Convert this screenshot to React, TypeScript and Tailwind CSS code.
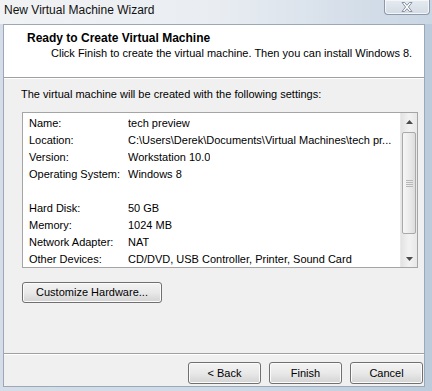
import React from 'react'

const rows = [
  ['Name:', 'tech preview'],
  ['Location:', 'C:\\Users\\Derek\\Documents\\Virtual Machines\\tech pr...'],
  ['Version:', 'Workstation 10.0'],
  ['Operating System:', 'Windows 8'],
  ['', ''],
  ['Hard Disk:', '50 GB'],
  ['Memory:', '1024 MB'],
  ['Network Adapter:', 'NAT'],
  ['Other Devices:', 'CD/DVD, USB Controller, Printer, Sound Card'],
]

const WinButton = ({ label, className }: { label: string; className: string }) => (
  <div
    className={`flex items-center justify-center rounded-[3px] border border-[#707070] bg-linear-to-b from-[#f3f3f3] via-[#e9e9e9] to-[#d3d3d3] text-[11px] leading-[15px] text-black shadow-[inset_0_0_0_1px_#fbfbfb] ${className}`}
  >
    {label}
  </div>
)

const Arrow = ({ up }: { up: boolean }) => (
  <svg width="7" height="4" viewBox="0 0 7 4">
    {up ? <polygon points="0,4 3.5,0 7,4" fill="#4a4a4a" /> : <polygon points="0,0 3.5,4 7,0" fill="#4a4a4a" />}
  </svg>
)

const App = () => {
  return (
    <div className="w-[432px] h-[391px] flex flex-col bg-linear-to-r from-[#d4dde8] via-[#cfdae6] to-[#bccbdc] font-['Liberation_Sans',Arial,sans-serif] text-[11px] text-black overflow-hidden">
      {/* title bar */}
      <div className="h-[24px] flex items-start justify-between bg-linear-to-r from-[#f1f2f4] via-[#e9edf2] to-[#c9d6e4]">
        <div className="pl-[4px] pt-[3px] text-[12px] leading-[15px] text-[#111]">New Virtual Machine Wizard</div>
        <div className="mr-[2px] w-[46px] h-[15px] flex items-center justify-center rounded-b-[4px] border border-t-0 border-[#8d99a8] bg-linear-to-b from-[#e6ebf1] to-[#d3dbe4] shadow-[inset_0_0_0_1px_#f4f6f9]">
          <svg width="12" height="10" viewBox="0 0 12 10">
            <polygon
              points="1,0.5 3.6,0.5 6,3.3 8.4,0.5 11,0.5 7.4,5 11,9.5 8.4,9.5 6,6.7 3.6,9.5 1,9.5 4.6,5"
              fill="#ffffff"
              stroke="#7d8896"
              strokeWidth="0.9"
            />
          </svg>
        </div>
      </div>

      {/* client area */}
      <div className="ml-[3px] w-[422px] h-[363px] flex flex-col border border-[#9aa8b8] bg-[#f0f0f0]">
        <div className="h-[53px] bg-white border-b border-[#a0a0a0] pt-[6px] leading-[15px]">
          <div className="pl-[23px] text-[12px] font-bold">Ready to Create Virtual Machine</div>
          <div className="pl-[47px]">Click Finish to create the virtual machine. Then you can install Windows 8.</div>
        </div>

        <div className="flex-1 pl-[17px] pt-[8px] border-t border-white">
          <div className="leading-[15px]">The virtual machine will be created with the following settings:</div>

          <div className="mt-[10px] ml-[1px] w-[396px] h-[156px] flex border border-[#a5a5a5] bg-white">
            <div className="flex-1 pt-[2px] pl-[6px] overflow-hidden">
              {rows.map((r, i) => (
                <div key={i} className="flex h-[17px] leading-[17px] whitespace-nowrap">
                  <div className="w-[99px] shrink-0">{r[0]}</div>
                  <div className="overflow-hidden">{r[1]}</div>
                </div>
              ))}
            </div>
            <div className="w-[17px] flex flex-col bg-linear-to-r from-[#e3e3e3] via-[#f2f2f2] to-[#e8e8e8] border-l border-[#e9e9e9]">
              <div className="h-[17px] flex items-center justify-center">
                <Arrow up={true} />
              </div>
              <div className="mt-[2px] mx-[1px] h-[102px] flex flex-col items-center justify-center gap-[1px] rounded-[2px] border border-[#a9a9a9] bg-linear-to-r from-[#f6f6f6] via-[#ececec] to-[#dcdcdc]">
                <div className="w-[7px] h-[1px] bg-[#b8b8b8]" />
                <div className="w-[7px] h-[1px] bg-[#b8b8b8]" />
                <div className="w-[7px] h-[1px] bg-[#b8b8b8]" />
                <div className="w-[7px] h-[1px] bg-[#b8b8b8]" />
              </div>
              <div className="flex-1" />
              <div className="h-[17px] flex items-center justify-center">
                <Arrow up={false} />
              </div>
            </div>
          </div>

          <WinButton label="Customize Hardware..." className="mt-[14px] ml-[1px] w-[140px] h-[21px]" />
        </div>

        <div className="h-[33px] border-t border-[#a0a0a0]">
          <div className="h-full border-t border-white flex justify-end gap-[8px] pt-[7px] pr-[1px]">
            <WinButton label="< Back" className="w-[73px] h-[22px]" />
            <WinButton label="Finish" className="w-[73px] h-[22px]" />
            <WinButton label="Cancel" className="w-[73px] h-[22px]" />
          </div>
        </div>
      </div>
    </div>
  )
}

export default App
